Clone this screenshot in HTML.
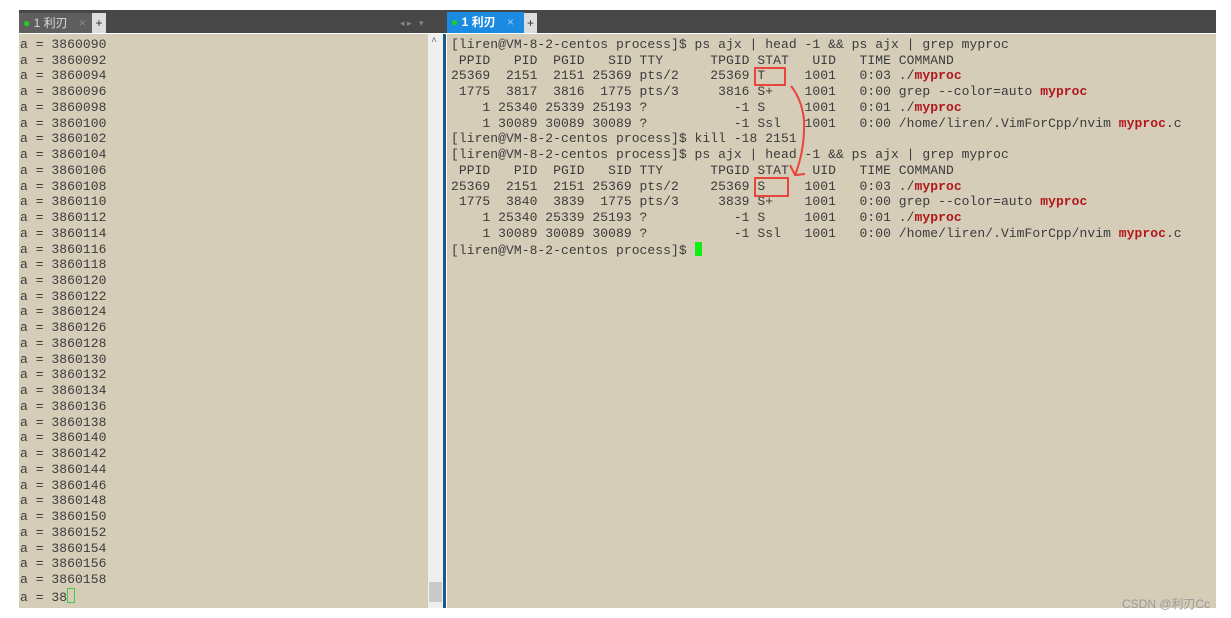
<!DOCTYPE html>
<html><head><meta charset="utf-8"><style>
body{margin:0;width:1231px;height:618px;background:#fff;position:relative;overflow:hidden;font-family:"Liberation Mono","DejaVu Sans Mono",monospace;}
.bar{position:absolute;left:19px;top:10px;width:1197px;height:23px;background:#474747;}
.tab{position:absolute;top:13px;height:20px;font:12px "Liberation Sans","Noto Sans CJK SC",sans-serif;line-height:20px;}
.pane{box-sizing:border-box;position:absolute;top:34px;height:574px;background:#d6cdb9;color:#3b3b3b;font-size:13px;letter-spacing:0.055px;line-height:15.74px;white-space:pre;overflow:hidden;}
.r{color:#b0161b;font-weight:bold}
.box{position:absolute;border:2px solid #e8453c;}
</style></head><body>
<div class="bar"></div>
<div class="tab" style="left:19px;width:70px;background:#5e5e5e;color:#ddd;padding-left:4px"><span style="color:#2c2">●</span> 1 利刃 <span style="color:#888;margin-left:8px">×</span></div>
<div class="tab" style="left:92px;width:14px;background:#ddd;color:#333;text-align:center">+</div>
<div class="tab" style="left:400px;color:#888;font-size:9px">◂ ▸ &nbsp;&nbsp;▾</div>
<div class="tab" style="left:447px;width:73px;background:#1a8be0;color:#fff;padding-left:4px;top:12px;height:21px"><span style="color:#2c2">●</span> <b>1 利刃</b> <span style="color:#9cf;margin-left:8px">×</span></div>
<div class="tab" style="left:524px;width:13px;background:#ddd;color:#333;text-align:center">+</div>
<div class="pane" style="left:19px;width:409px;padding:3px 0 0 1px">a = 3860090
a = 3860092
a = 3860094
a = 3860096
a = 3860098
a = 3860100
a = 3860102
a = 3860104
a = 3860106
a = 3860108
a = 3860110
a = 3860112
a = 3860114
a = 3860116
a = 3860118
a = 3860120
a = 3860122
a = 3860124
a = 3860126
a = 3860128
a = 3860130
a = 3860132
a = 3860134
a = 3860136
a = 3860138
a = 3860140
a = 3860142
a = 3860144
a = 3860146
a = 3860148
a = 3860150
a = 3860152
a = 3860154
a = 3860156
a = 3860158
a = 38<span style="display:inline-block;width:6px;height:13px;border:1px solid #4c4;vertical-align:-2px"></span></div>
<div style="position:absolute;left:428px;top:34px;width:15px;height:574px;background:#efefef"></div>
<div style="position:absolute;left:429px;top:582px;width:13px;height:20px;background:#c9c9c9"></div>
<div style="position:absolute;left:431px;top:37px;font-size:10px;color:#666">^</div>
<div style="position:absolute;left:443px;top:34px;width:3px;height:574px;background:#1d5a8c"></div>
<div class="pane" style="left:447px;width:769px;padding:3px 0 0 4px">[liren@VM-8-2-centos process]$ ps ajx | head -1 &amp;&amp; ps ajx | grep myproc
 PPID   PID  PGID   SID TTY      TPGID STAT   UID   TIME COMMAND
25369  2151  2151 25369 pts/2    25369 T     1001   0:03 ./<span class="r">myproc</span>
 1775  3817  3816  1775 pts/3     3816 S+    1001   0:00 grep --color=auto <span class="r">myproc</span>
    1 25340 25339 25193 ?           -1 S     1001   0:01 ./<span class="r">myproc</span>
    1 30089 30089 30089 ?           -1 Ssl   1001   0:00 /home/liren/.VimForCpp/nvim <span class="r">myproc</span>.c
[liren@VM-8-2-centos process]$ kill -18 2151
[liren@VM-8-2-centos process]$ ps ajx | head -1 &amp;&amp; ps ajx | grep myproc
 PPID   PID  PGID   SID TTY      TPGID STAT   UID   TIME COMMAND
25369  2151  2151 25369 pts/2    25369 S     1001   0:03 ./<span class="r">myproc</span>
 1775  3840  3839  1775 pts/3     3839 S+    1001   0:00 grep --color=auto <span class="r">myproc</span>
    1 25340 25339 25193 ?           -1 S     1001   0:01 ./<span class="r">myproc</span>
    1 30089 30089 30089 ?           -1 Ssl   1001   0:00 /home/liren/.VimForCpp/nvim <span class="r">myproc</span>.c
[liren@VM-8-2-centos process]$ <span style="display:inline-block;width:7px;height:14px;background:#1e1;vertical-align:-2px"></span></div>
<div class="box" style="left:754px;top:67px;width:28px;height:15px"></div>
<div class="box" style="left:754px;top:177px;width:31px;height:16px"></div>
<svg style="position:absolute;left:780px;top:80px" width="40" height="100"><path d="M11 6 Q22 20 24 40 Q25 70 15 95 M10 85 L15 95 L25 94" fill="none" stroke="#e8453c" stroke-width="2"/></svg>
<div style="position:absolute;left:1122px;top:595px;font:12px 'Liberation Sans','Noto Sans CJK SC',sans-serif;color:#999">CSDN @利刃Cc</div>
</body></html>
